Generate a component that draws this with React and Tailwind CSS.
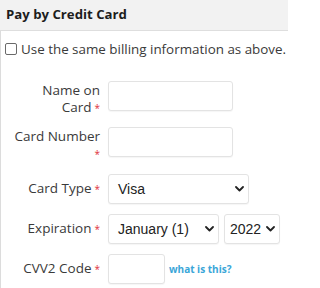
import React from "react";

const font = { fontFamily: '"Open Sans", sans-serif' };

function Chevron() {
  return (
    <svg width="9" height="6" viewBox="0 0 9 6" fill="none">
      <path d="M1 1 L4.5 4.5 L8 1" stroke="#222" strokeWidth="1.8" strokeLinecap="round" strokeLinejoin="round" />
    </svg>
  );
}

function Req() {
  return <span className="text-[#e0313a] text-[10px] ml-[3px] align-middle">*</span>;
}

function Select({ value, className, pl = "pl-[9px]" }) {
  return (
    <div className={"h-[30px] shrink-0 border border-[#e3e3e3] rounded-[3px] bg-white flex items-center justify-between pr-[4px] shadow-[0_1px_1px_rgba(0,0,0,0.04)] " + pl + " " + className}>
      <span className="text-[14px] text-[#222]" style={{ fontFamily: '"Liberation Sans", Arial, sans-serif' }}>{value}</span>
      <Chevron />
    </div>
  );
}

function Input({ className }) {
  return <div className={"h-[30px] shrink-0 border border-[#e3e3e3] rounded-[3px] bg-white shadow-[0_1px_1px_rgba(0,0,0,0.04)] " + className} />;
}

export default function App() {
  return (
    <div className="w-[288px] h-[288px] bg-white overflow-hidden text-[#333]" style={font}>
      <div className="h-[31px] bg-[#f2f2f2] border-b border-[#dedede] flex items-center pl-[6px]">
        <span className="text-[13.2px] font-bold text-[#1d1d1d]">Pay by Credit Card</span>
      </div>
      <div className="border-l border-[#dcdcdc] h-[257px]">
        <div className="flex items-center pt-[9px] pl-[4px]">
          <span className="w-[12px] h-[12px] shrink-0 border border-[#6a6a6a] rounded-[2px] bg-white"></span>
          <span className="ml-[4px] text-[13.4px] leading-[18px] text-[#3a3a3a] whitespace-nowrap">Use the same billing information as above.</span>
        </div>
        <div className="pt-[23px] flex flex-col gap-[10px] text-[13.5px] text-[#3a3a3a]">
          <div className="flex items-start">
            <div className="w-[100px] pr-[1px] text-right leading-[17px] pt-[1px] h-[36px]">Name on<br />Card<Req /></div>
            <Input className="ml-[7px] w-[125px]" />
          </div>
          <div className="flex items-start">
            <div className="w-[100px] pr-[1px] text-right leading-[17px] pt-[1px] h-[37px]">Card Number<br /><Req /></div>
            <Input className="ml-[7px] w-[125px]" />
          </div>
          <div className="flex items-center">
            <div className="w-[100px] pr-[1px] text-right leading-[17px]">Card Type<Req /></div>
            <Select value="Visa" className="ml-[7px] w-[141px]" />
          </div>
          <div className="flex items-center">
            <div className="w-[100px] pr-[1px] text-right leading-[17px]">Expiration<Req /></div>
            <Select value="January (1)" className="ml-[7px] w-[111px]" />
            <Select value="2022" pl="pl-[5px]" className="ml-[5px] w-[56px]" />
          </div>
          <div className="flex items-center">
            <div className="w-[100px] pr-[1px] text-right leading-[17px]">CVV2 Code<Req /></div>
            <Input className="ml-[7px] w-[57px]" />
            <span className="ml-[4px] text-[10px] font-bold text-[#3aa6d8] whitespace-nowrap">what is this?</span>
          </div>
        </div>
      </div>
    </div>
  );
}
